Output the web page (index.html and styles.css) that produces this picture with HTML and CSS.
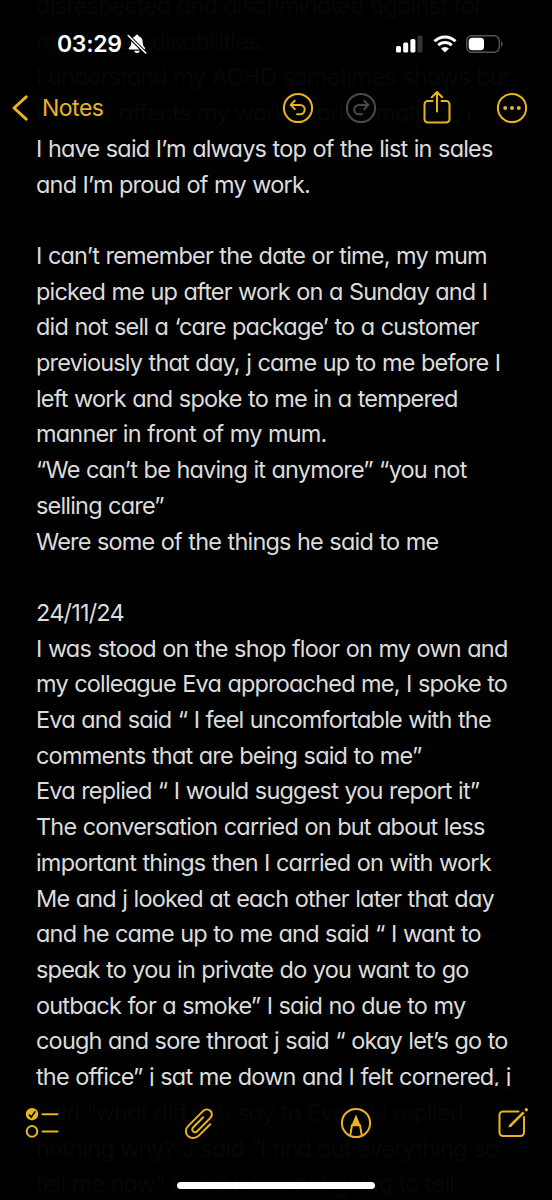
FILE: index.html
```html
<!DOCTYPE html>
<html lang="en">
<head>
  <meta charset="UTF-8">
  <meta name="viewport" content="width=device-width, initial-scale=1.0">
  <title>Notes</title>
  <link rel="stylesheet" href="styles.css">
</head>
<body>
  <div class="phone">
    <main class="note">
      <p>disrespected and discriminated against for</p>
      <p>my hidden disabilities.</p>
      <p>I understand my ADHD sometimes shows but</p>
      <p>it never affects my work, work it matters, i</p>
      <p>I have said I’m always top of the list in sales</p>
      <p>and I’m proud of my work.</p>
      <p><br></p>
      <p>I can’t remember the date or time, my mum</p>
      <p>picked me up after work on a Sunday and I</p>
      <p>did not sell a ‘care package’ to a customer</p>
      <p>previously that day, j came up to me before I</p>
      <p>left work and spoke to me in a tempered</p>
      <p>manner in front of my mum.</p>
      <p>“We can’t be having it anymore” “you not</p>
      <p>selling care”</p>
      <p>Were some of the things he said to me</p>
      <p><br></p>
      <p>24/11/24</p>
      <p>I was stood on the shop floor on my own and</p>
      <p>my colleague Eva approached me, I spoke to</p>
      <p>Eva and said “ I feel uncomfortable with the</p>
      <p>comments that are being said to me”</p>
      <p>Eva replied “ I would suggest you report it”</p>
      <p>The conversation carried on but about less</p>
      <p>important things then I carried on with work</p>
      <p>Me and j looked at each other later that day</p>
      <p>and he came up to me and said “ I want to</p>
      <p>speak to you in private do you want to go</p>
      <p>outback for a smoke” I said no due to my</p>
      <p>cough and sore throat j said “ okay let’s go to</p>
      <p>the office” j sat me down and I felt cornered, j</p>
      <p>said “what did you say to Eva” J I replied</p>
      <p>nothing why? J said “I find out everything so</p>
      <p>tell me now” I said I was not going to tell</p>
    </main>

    <header class="top">
      <div class="status">
        <span class="time">03:29</span>
        <svg class="bell" width="20" height="20" viewBox="0 0 20 20">
          <path d="M10 .8c-1 0-1.700.7-1.800 1.500C5.400 3.200 4.300 5.500 4.300 8c0 3-.6 4.200-2.200 5.700-.7.700-.5 1.700.5 1.700h14.800c1 0 1.200-1 .5-1.700C16.300 12.200 15.700 11 15.700 8c0-2.500-1.100-4.800-3.900-5.700C11.700 1.500 11 .8 10 .8zM7.200 16.700h5.600c-.2 1.300-1.300 2.300-2.800 2.300s-2.600-1-2.800-2.300z" fill="#fff"/>
          <path d="M1 1.500 18.500 19" stroke="#000" stroke-width="3.600"/>
          <path d="M1.200 1.500 18.700 19" stroke="#fff" stroke-width="1.600" stroke-linecap="round"/>
        </svg>
        <svg class="signal" width="28" height="18" viewBox="0 0 28 18">
          <rect x="0" y="11" width="5" height="6.500" rx="1.500" fill="#fff"/>
          <rect x="7.200" y="7.500" width="5" height="10" rx="1.500" fill="#fff"/>
          <rect x="14.400" y="4" width="5" height="13.500" rx="1.500" fill="#fff"/>
          <rect x="21.600" y=".5" width="5" height="17" rx="1.500" fill="#333"/>
        </svg>
        <svg class="wifi" width="24" height="18" viewBox="0 0 24 18">
          <g fill="none" stroke="#fff" stroke-width="3">
            <path d="M1.500 6.300a15 15 0 0 1 21 0"/>
            <path d="M5.300 10.200a9.500 9.500 0 0 1 13.400 0"/>
          </g>
          <path d="M12 17.600 8 13.600a5.700 5.700 0 0 1 8 0z" fill="#fff"/>
        </svg>
        <svg class="battery" width="38" height="18" viewBox="0 0 38 18">
          <rect x=".7" y=".7" width="32.600" height="16.600" rx="5" fill="none" stroke="#555" stroke-width="1.400"/>
          <rect x="2.700" y="2.700" width="15.300" height="12.600" rx="3.500" fill="#fff"/>
          <path d="M35 6.300c2.300.8 2.300 4.600 0 5.400z" fill="#555"/>
        </svg>
      </div>
      <nav class="nav">
        <svg class="back" width="17" height="26" viewBox="0 0 17 26">
          <path d="M14.200 1.800 2 13l12.200 11.200" fill="none" stroke="#e8b41f" stroke-width="3" stroke-linecap="round" stroke-linejoin="round"/>
        </svg>
        <span class="back-label">Notes</span>
        <svg class="undo" width="32" height="32" viewBox="0 0 32 32">
          <g class="line">
            <circle cx="16" cy="16" r="14.100"/>
            <path d="M12.800 8.700 8.600 12.900l4.200 4.200M9 12.900h9a4.700 4.700 0 0 1 0 9.400h-3"/>
          </g>
        </svg>
        <svg class="redo" width="32" height="32" viewBox="0 0 32 32">
          <g class="line dim">
            <circle cx="16" cy="16" r="14.100"/>
            <path d="M19.200 8.700l4.200 4.200-4.200 4.200M23 12.900h-9a4.700 4.700 0 0 0 0 9.400h3"/>
          </g>
        </svg>
        <svg class="share" width="28" height="34" viewBox="0 0 28 34">
          <g class="line">
            <path d="M9.500 10H4.800A3.300 3.300 0 0 0 1.500 13.300v14.900a3.300 3.300 0 0 0 3.300 3.300h18.400a3.300 3.300 0 0 0 3.300-3.300V13.300a3.300 3.300 0 0 0-3.300-3.300h-4.700M14 20.500V1.500M8.800 6.200 14 1l5.200 5.200"/>
          </g>
        </svg>
        <svg class="more" width="32" height="32" viewBox="0 0 32 32">
          <circle class="line" cx="16" cy="16" r="14.100"/>
          <g fill="#e8b41f">
            <circle cx="9.200" cy="16" r="2"/>
            <circle cx="16" cy="16" r="2"/>
            <circle cx="22.800" cy="16" r="2"/>
          </g>
        </svg>
      </nav>
    </header>

    <footer class="bottom">
      <div class="tools">
        <svg class="checklist" width="34" height="32" viewBox="0 0 34 32">
          <circle cx="7" cy="7.200" r="6.200" fill="#e8b41f"/>
          <path d="m4 7.500 2.200 2.600 4-5.700" fill="none" stroke="#000" stroke-width="1.600"/>
          <g class="line">
            <circle cx="7" cy="24.400" r="5.300"/>
            <path d="M17.500 7.200h15M17.500 24.400h15"/>
          </g>
        </svg>
        <svg class="clip" width="30" height="34" viewBox="0 0 30 34">
          <path class="line" d="m26.300 18.300-11.500 11.300c-3.300 3.200-7.700 3.200-10.600.7-3.200-2.900-3-7.300.1-10.400L19 5.100c2.200-2.200 5.200-2.200 7.300-.3 2.100 2 2.100 5.100-.1 7.300L13.200 25.200c-1.300 1.300-3 1.300-4.100.2-1.200-1.100-1.100-2.900.2-4.200L19.200 11.300"/>
        </svg>
        <svg class="markup" width="32" height="32" viewBox="0 0 32 32">
          <g class="line">
            <circle cx="16" cy="16" r="14.100"/>
            <path d="M10.200 28.700 12 18.200h8l1.800 10.500"/>
          </g>
          <path d="M16 7.600 20.800 19h-9.600z" fill="#e8b41f"/>
        </svg>
        <svg class="compose" width="32" height="32" viewBox="0 0 32 32">
          <path class="line" d="M21.500 4.500H6A3.500 3.500 0 0 0 2.500 8v17.500A3.500 3.500 0 0 0 6 29h17.500a3.500 3.500 0 0 0 3.500-3.500V10"/>
          <path d="M13 19 26.700 5.300" fill="none" stroke="#e8b41f" stroke-width="2.600"/>
          <path d="m11.500 20.600 1-3.300 2.300 2.300z" fill="#e8b41f"/>
          <circle cx="29.300" cy="2.700" r="1.700" fill="#e8b41f"/>
        </svg>
      </div>
      <div class="home"></div>
    </footer>
  </div>
</body>
</html>
```
FILE: styles.css
```css
body {
  margin: 0;
  background-color: #000000;
  font-family: Inter, "Liberation Sans", sans-serif;
}

.phone {
  position: relative;
  width: 552px;
  height: 1200px;
  overflow: hidden;
  background-color: #000000;
}

.note {
  margin-top: -12px;
  padding-left: 36px;
  color: #dcdcdc;
  font-size: 23.5px;
  letter-spacing: -0.82px;
  word-spacing: 0.6px;
  line-height: 35.7px;
  font-feature-settings: "cv11";
  white-space: nowrap;
}

.note p {
  margin: 0;
}

/* Bars float over the scrolling note and let a little text through */
.top,
.bottom {
  position: absolute;
  left: 0;
  width: 552px;
  background-color: rgba(0, 0, 0, 0.972);
}

.top {
  top: 0;
  height: 131px;
}

.bottom {
  top: 1086px;
  height: 114px;
}

.status {
  display: flex;
  align-items: center;
  height: 28px;
  padding: 30px 48px 0 57px;
}

.time {
  color: #ffffff;
  font-size: 23px;
  font-weight: 600;
  letter-spacing: -0.3px;
}

.bell {
  margin-left: 5px;
}

.signal {
  margin-left: auto;
}

.wifi {
  margin-left: 9px;
}

.battery {
  margin-left: 9px;
}

.nav {
  display: flex;
  align-items: center;
  height: 34px;
  padding: 33px 24px 0 12px;
}

.back-label {
  margin-left: 13px;
  color: #e8b41f;
  font-size: 23px;
  letter-spacing: -0.5px;
}

.undo {
  margin-left: auto;
}

.redo {
  margin-left: 31px;
}

.share {
  margin-left: 46px;
}

.more {
  margin-left: 45.5px;
}

.line {
  fill: none;
  stroke: #e8b41f;
  stroke-width: 2;
  stroke-linecap: round;
  stroke-linejoin: round;
}

.dim {
  stroke: #4a4a4c;
}

.tools {
  display: flex;
  align-items: center;
  justify-content: space-between;
  height: 34px;
  padding: 20px 23px 0 25px;
}

.home {
  width: 198px;
  height: 7px;
  margin: 42px auto 0;
  border-radius: 4px;
  background-color: #ffffff;
}
```
